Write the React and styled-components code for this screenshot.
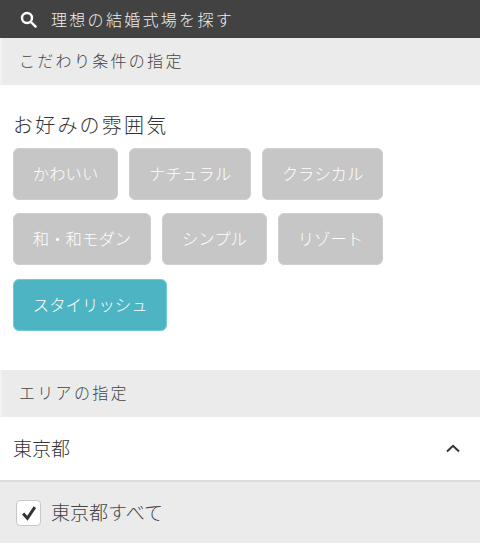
import React from "react";
import styled, { createGlobalStyle } from "styled-components";

const Global = createGlobalStyle`
  html, body { margin: 0; padding: 0; background: #fff; }
  body { font-family: "Noto Sans CJK JP", "Noto Sans", sans-serif; font-weight: 300; color: #444; overflow: hidden; }
`;
const Page = styled.div`
  width: 480px;
  height: 543px;
  overflow: hidden;
  display: flex;
  flex-direction: column;
`;
const TopBar = styled.header`
  height: 38px;
  flex: none;
  background: #424242;
  display: flex;
  align-items: center;
  padding-left: 20px;
  gap: 14px;
  color: #eeeeee;
  font-size: 16px;
  letter-spacing: 2.3px;
`;
const SectionHead = styled.h2`
  margin: 0;
  flex: none;
  height: 47px;
  background: #ebebeb;
  border-left: 2px solid #f1f1f1;
  display: flex;
  align-items: center;
  padding: 0 0 3px 17px;
  box-sizing: border-box;
  font-size: 16px;
  font-weight: 300;
  letter-spacing: 2.3px;
  color: #444;
`;
const Mood = styled.section`
  flex: none;
  height: 285px;
  box-sizing: border-box;
  padding: 26px 13px 0;
`;
const Title = styled.h3`
  margin: 0 0 10px;
  height: 27px;
  line-height: 27px;
  font-size: 20px;
  font-weight: 300;
  letter-spacing: 2.2px;
  color: #333;
`;
const Chips = styled.div`
  display: flex;
  flex-wrap: wrap;
  gap: 13.4px 11px;
  width: 400px;
`;
const Chip = styled.button`
  height: 52px;
  box-sizing: border-box;
  padding: 0 18.85px 2px;
  border: 1px solid ${(p) => (p.$on ? "#72cbd6" : "#cecece")};
  border-radius: 6px;
  background: ${(p) => (p.$on ? "#4cb4c2" : "#c6c6c6")};
  color: #fff;
  font: inherit;
  font-size: 16.4px;
  white-space: nowrap;
`;
const AreaRow = styled.div`
  flex: none;
  height: 65px;
  box-sizing: border-box;
  border-bottom: 2px solid #dcdcdc;
  display: flex;
  align-items: center;
  justify-content: space-between;
  padding: 0 20px 1px 13px;
  font-size: 19px;
  color: #333;
`;
const AreaName = styled.span`
  margin-top: -1px;
`;
const CheckRow = styled.label`
  flex: 1;
  background: #ebebeb;
  display: flex;
  align-items: center;
  gap: 10px;
  padding-left: 16px;
  font-size: 19px;
  color: #444;
`;
const CheckText = styled.span`
  margin-top: -2px;
`;
const Box = styled.span`
  width: 23px;
  height: 24px;
  border: 1px solid #c8c8c8;
  border-radius: 4px;
  background: #fff;
  display: flex;
  align-items: center;
  justify-content: center;
`;

const moods = ["かわいい", "ナチュラル", "クラシカル", "和・和モダン", "シンプル", "リゾート", "スタイリッシュ"];

export default function App() {
  return (
    <Page>
      <Global />
      <TopBar>
        <svg width="17" height="17" viewBox="0 0 17 17" fill="none" stroke="#fff" strokeWidth="2.4">
          <circle cx="7" cy="7" r="5" />
          <path d="M10.8 10.8 L15.6 15.6" strokeLinecap="round" />
        </svg>
        <span>理想の結婚式場を探す</span>
      </TopBar>
      <SectionHead>こだわり条件の指定</SectionHead>
      <Mood>
        <Title>お好みの雰囲気</Title>
        <Chips>
          {moods.map((m) => (
            <Chip key={m} $on={m === "スタイリッシュ"}>{m}</Chip>
          ))}
        </Chips>
      </Mood>
      <SectionHead>エリアの指定</SectionHead>
      <AreaRow>
        <AreaName>東京都</AreaName>
        <svg width="14" height="9" viewBox="0 0 14 9" fill="none" stroke="#333" strokeWidth="2">
          <path d="M1 7.5 L7 1.8 L13 7.5" />
        </svg>
      </AreaRow>
      <CheckRow>
        <Box>
          <svg width="16" height="16" viewBox="0 0 15 15" fill="none" stroke="#333" strokeWidth="2.8">
            <path d="M2 8 L6 12.5 L13 2" />
          </svg>
        </Box>
        <CheckText>東京都すべて</CheckText>
      </CheckRow>
    </Page>
  );
}
